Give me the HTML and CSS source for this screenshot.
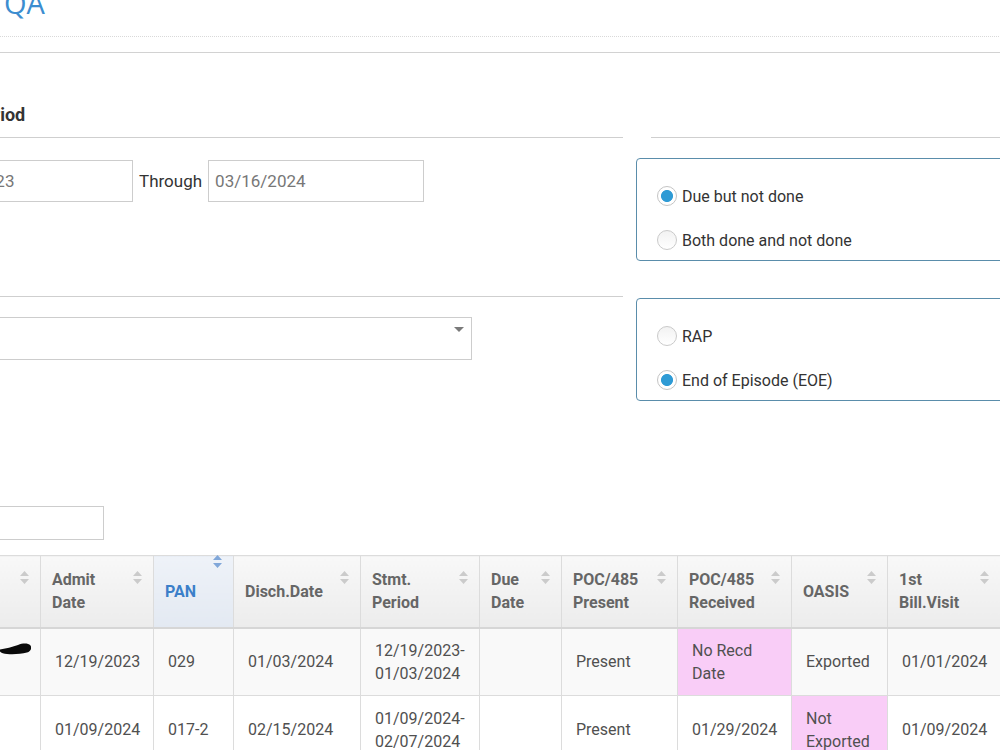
FILE: index.html
```html
<!DOCTYPE html>
<html lang="en">
<head>
<meta charset="utf-8">
<title>QA</title>
<link rel="stylesheet" href="styles.css">
</head>
<body>
<div class="page">
  <header class="page-header">
    <h1 class="page-title">QA</h1>
  </header>

  <div class="filters">
    <div class="filter-col">
      <h3 class="section-title">Billing Period</h3>
      <div class="date-range">
        <input class="field date" type="text" value="12/16/2023">
        <span class="range-label">Through</span>
        <input class="field date" type="text" value="03/16/2024">
      </div>
      <div class="section-rule"></div>
      <div class="select-box"><span class="caret"></span></div>
    </div>

    <div class="option-col">
      <div class="section-title blank"></div>
      <div class="option-box">
        <label class="option"><input type="radio" name="status" checked><span>Due but not done</span></label>
        <label class="option"><input type="radio" name="status"><span>Both done and not done</span></label>
      </div>
      <div class="option-box second">
        <label class="option"><input type="radio" name="claim"><span>RAP</span></label>
        <label class="option"><input type="radio" name="claim" checked><span>End of Episode (EOE)</span></label>
      </div>
    </div>
  </div>

  <div class="table-tools">
    <input class="field search" type="search">
  </div>

  <table class="grid">
    <colgroup>
      <col class="c-patient">
      <col class="c-admit">
      <col class="c-pan">
      <col class="c-disch">
      <col class="c-stmt">
      <col class="c-due">
      <col class="c-poc">
      <col class="c-recd">
      <col class="c-oasis">
      <col class="c-visit">
    </colgroup>
    <thead>
      <tr>
        <th><svg class="sort" viewBox="0 0 9 13"><path d="M4.5 0L9 5H0Z M0 8H9L4.5 13Z"/></svg></th>
        <th>Admit Date<svg class="sort" viewBox="0 0 9 13"><path d="M4.5 0L9 5H0Z M0 8H9L4.5 13Z"/></svg></th>
        <th class="sorted">PAN<svg class="sort active" viewBox="0 0 9 13"><path d="M4.5 0L9 5H0Z M0 8H9L4.5 13Z"/></svg></th>
        <th>Disch.Date<svg class="sort" viewBox="0 0 9 13"><path d="M4.5 0L9 5H0Z M0 8H9L4.5 13Z"/></svg></th>
        <th>Stmt. Period<svg class="sort" viewBox="0 0 9 13"><path d="M4.5 0L9 5H0Z M0 8H9L4.5 13Z"/></svg></th>
        <th>Due Date<svg class="sort" viewBox="0 0 9 13"><path d="M4.5 0L9 5H0Z M0 8H9L4.5 13Z"/></svg></th>
        <th>POC/485 Present<svg class="sort" viewBox="0 0 9 13"><path d="M4.5 0L9 5H0Z M0 8H9L4.5 13Z"/></svg></th>
        <th>POC/485 Received<svg class="sort" viewBox="0 0 9 13"><path d="M4.5 0L9 5H0Z M0 8H9L4.5 13Z"/></svg></th>
        <th>OASIS<svg class="sort" viewBox="0 0 9 13"><path d="M4.5 0L9 5H0Z M0 8H9L4.5 13Z"/></svg></th>
        <th>1st Bill.Visit<svg class="sort" viewBox="0 0 9 13"><path d="M4.5 0L9 5H0Z M0 8H9L4.5 13Z"/></svg></th>
      </tr>
    </thead>
    <tbody>
      <tr class="odd">
        <td class="patient"><svg class="redact" viewBox="0 0 113 40" width="113" height="40"><path d="M82 11.5C88 10.5 94 9 100 7C105 5 110 5 112.5 7.5C114 10 113 13.5 109 14.5C103 16 96 16.5 89 16C86 15.8 83 15 82 13.5Z"/></svg></td>
        <td>12/19/2023</td>
        <td>029</td>
        <td>01/03/2024</td>
        <td>12/19/2023-01/03/2024</td>
        <td></td>
        <td>Present</td>
        <td class="flag">No Recd Date</td>
        <td>Exported</td>
        <td>01/01/2024</td>
      </tr>
      <tr class="even">
        <td class="patient"></td>
        <td>01/09/2024</td>
        <td>017-2</td>
        <td>02/15/2024</td>
        <td>01/09/2024-02/07/2024</td>
        <td></td>
        <td>Present</td>
        <td>01/29/2024</td>
        <td class="flag">Not Exported</td>
        <td>01/09/2024</td>
      </tr>
    </tbody>
  </table>
</div>
</body>
</html>
```

FILE: styles.css
```css
* {
  box-sizing: border-box;
}

body {
  margin: 0;
  background: #fff;
  font-family: Roboto, "Open Sans", "Liberation Sans", sans-serif;
  color: #333;
  overflow: hidden;
}

/* the page is scrolled sideways, so its left part sits outside the window */
.page {
  margin: -17px 0 0 -98px;
  width: 1400px;
  padding: 0 15px;
}

.page-title {
  margin: 0;
  padding: 0 0 13px 87px;
  font-family: "Open Sans", sans-serif;
  font-weight: 400;
  font-size: 29px;
  line-height: 40px;
  color: #3c8dd0;
  border-bottom: 1px dotted #d9d9d9;
}

/* filter area */
.filters {
  margin-top: 15px;
  border-top: 1px solid #d2d2d2;
  display: grid;
  grid-template-columns: 706px 500px;
  column-gap: 13px;
  align-items: start;
}

.section-title {
  margin: 50px 0 0;
  padding-bottom: 10px;
  font-size: 18px;
  font-weight: 700;
  line-height: 24px;
  color: #333;
  border-bottom: 1px solid #cfcfcf;
}

.section-title.blank {
  height: 35px;
  margin-left: 15px;
}

.field {
  font-family: Roboto, "Open Sans", sans-serif;
  border: 1px solid #cdcdcd;
  background: #fff;
  border-radius: 0;
  outline: none;
}

.date-range {
  margin-top: 22px;
  display: flex;
  align-items: center;
}

.date {
  width: 216px;
  height: 42px;
  padding: 0 6px;
  font-size: 17px;
  color: #777;
}

.range-label {
  margin: 0 6px 0 6px;
  font-size: 17px;
  color: #333;
}

.section-rule {
  margin-top: 94px;
  border-top: 1px solid #cfcfcf;
}

.select-box {
  margin-top: 20px;
  width: 555px;
  height: 43px;
  border: 1px solid #cdcdcd;
  display: flex;
  justify-content: flex-end;
  align-items: flex-start;
  padding: 9px 7px 0 0;
}

.caret {
  width: 0;
  height: 0;
  border-left: 5.5px solid transparent;
  border-right: 5.5px solid transparent;
  border-top: 5.5px solid #7a7a7a;
}

/* radio groups */
.option-box {
  margin-top: 20px;
  border: 1px solid #5a8dab;
  border-radius: 4px;
  padding: 27px 20px 10px;
  display: flex;
  flex-direction: column;
  gap: 24px;
}

.option-box.second {
  margin-top: 37px;
}

.option {
  display: flex;
  align-items: center;
  gap: 5px;
  height: 20px;
  font-size: 16px;
  color: #333;
}

.option input {
  appearance: none;
  -webkit-appearance: none;
  margin: 0;
  width: 20px;
  height: 20px;
  border-radius: 50%;
  border: 1px solid #cacaca;
  background: linear-gradient(#f2f2f2, #fff);
}

.option input:checked {
  background: radial-gradient(circle, #2f9bd5 0 5.6px, #fff 6.4px);
  border-color: #c4c4c4;
}

/* table */
.table-tools {
  margin-top: 105px;
}

.search {
  width: 187px;
  height: 34px;
}

.grid {
  margin-top: 15px;
  border-collapse: collapse;
  table-layout: fixed;
  width: 1083px;
  font-size: 16px;
  line-height: 23px;
}

.c-patient { width: 123px; }
.c-admit { width: 113px; }
.c-pan { width: 80px; }
.c-disch { width: 127px; }
.c-stmt { width: 119px; }
.c-due { width: 82px; }
.c-poc { width: 116px; }
.c-recd { width: 114px; }
.c-oasis { width: 96px; }
.c-visit { width: 113px; }

.grid th {
  position: relative;
  height: 72px;
  padding: 12px 26px 12px 11px;
  text-align: left;
  vertical-align: middle;
  font-weight: 700;
  color: #666;
  background: linear-gradient(#f8f8f8, #ececec);
  border: 1px solid #dcdcdc;
  border-bottom: 2px solid #d6d6d6;
}

.grid th.sorted {
  color: #3b7fc9;
  background: linear-gradient(#eef2f8, #e3e9f2);
}

.sort {
  position: absolute;
  top: 15px;
  right: 11px;
  width: 9px;
  height: 13px;
  fill: #cbcbcb;
}

.sort.active {
  top: -1px;
  fill: #80a7d9;
}

.grid td {
  height: 68px;
  padding: 10px 10px 10px 14px;
  vertical-align: middle;
  color: #505050;
  border: 1px solid #dcdcdc;
}

.grid tr.odd td {
  background: #f9f9f9;
}

.grid tr.even td {
  background: #fff;
}

.grid td.flag {
  background: #f9cdf7 !important;
}

.grid td.patient {
  padding: 0;
}

.redact {
  display: block;
  margin-top: -8px;
  fill: #0a0a0a;
}
```
